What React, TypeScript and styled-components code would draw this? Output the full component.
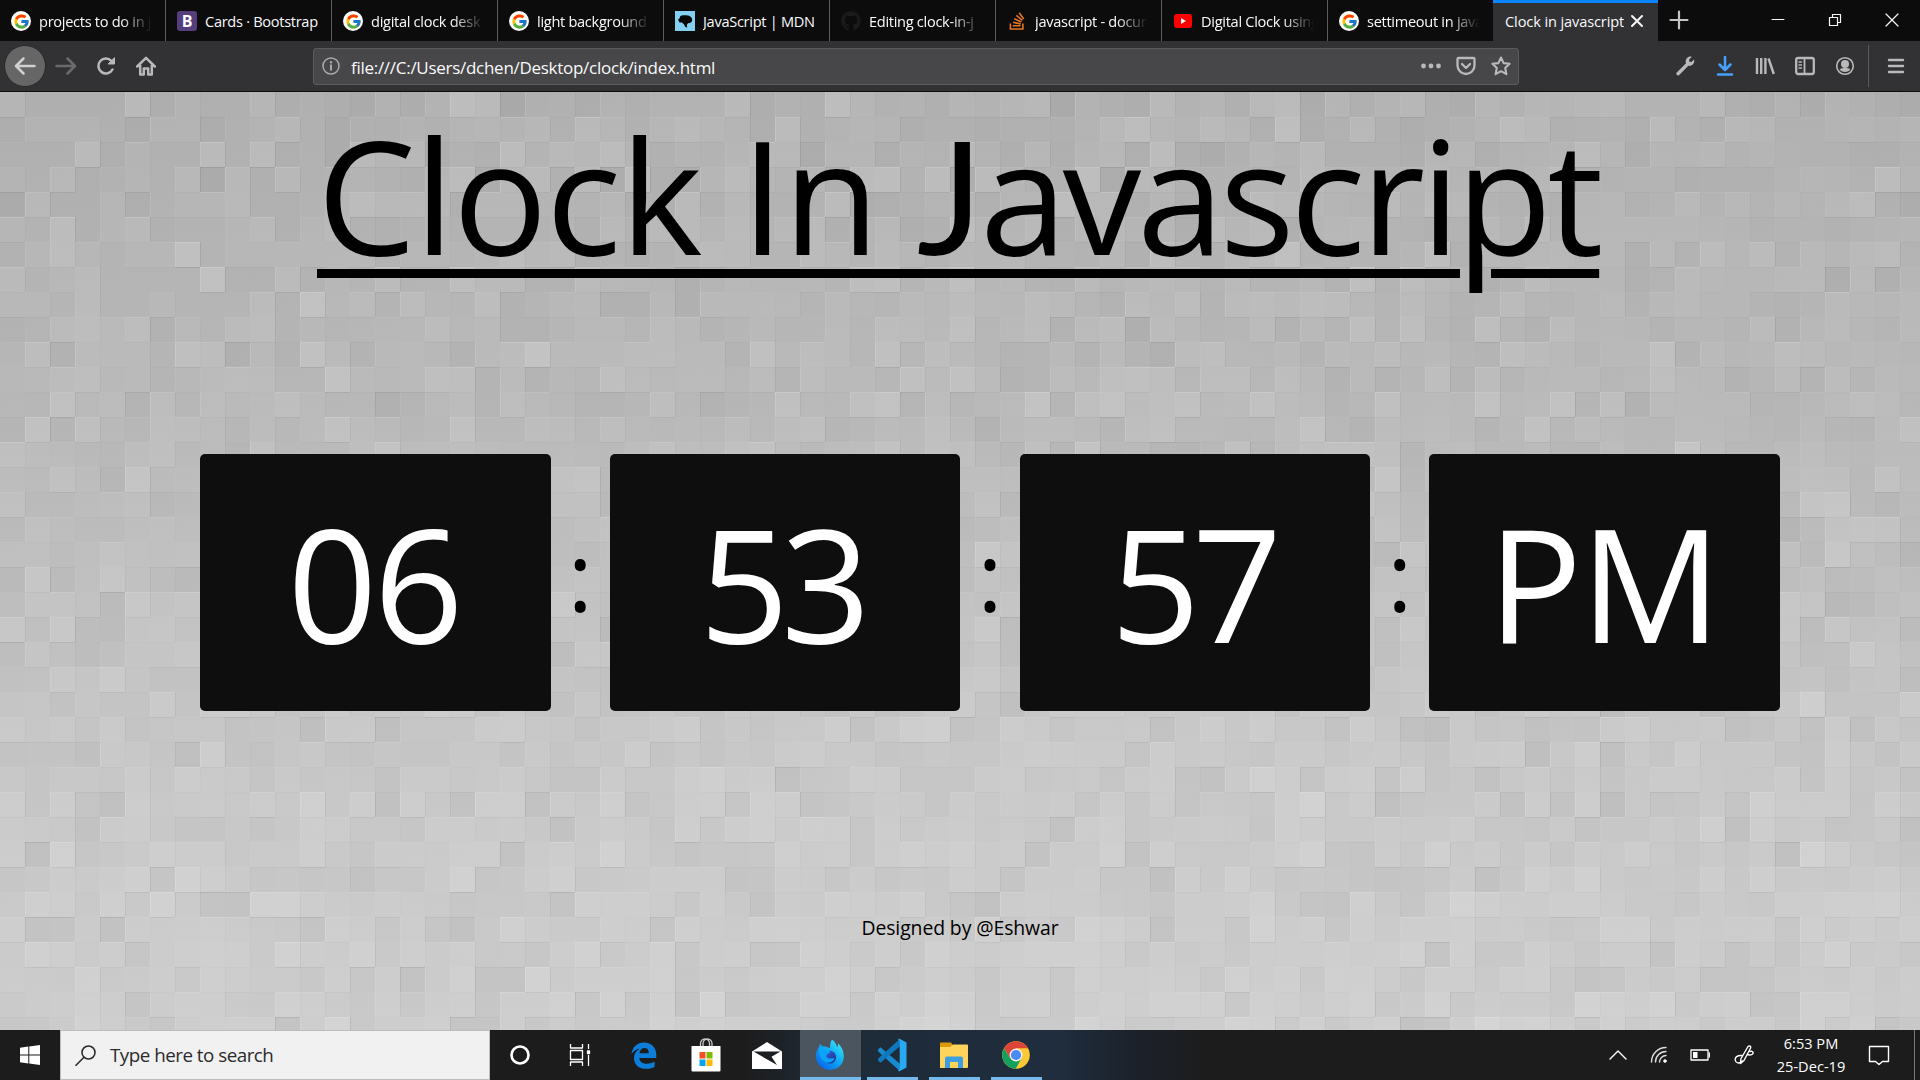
import React from 'react';
import styled, { createGlobalStyle, css } from 'styled-components';
import { FcGoogle } from 'react-icons/fc';
import { FaGithub, FaStackOverflow } from 'react-icons/fa';

const GlobalStyle = createGlobalStyle`
  * { box-sizing: border-box; }
  html, body { margin: 0; padding: 0; }
  body {
    width: 1920px; height: 1080px; overflow: hidden; background: #bdbdbd;
    font-family: "Open Sans", "Noto Sans", sans-serif;
  }
  svg { display: block; flex: none; }
`;

const Screen = styled.div`
  width: 1920px; height: 1080px; display: flex; flex-direction: column; overflow: hidden;
`;

/* ---------- tab strip ---------- */
const TabStrip = styled.header`
  height: 41px; flex: none; display: flex; background: #0c0c0d; color: #f9f9fa;
`;
const Tab = styled.div<{ $active?: boolean; $last?: boolean }>`
  width: 166px; height: 41px; flex: none; display: flex; align-items: center;
  padding: 1px 12px 0 11px; gap: 8px;
  border-right: 1px solid ${p => (p.$active || p.$last ? 'transparent' : '#5d5d5f')};
  ${p => p.$active && css`
    width: 165px; margin-left: -1px; background: #323234; box-shadow: inset 0 3px #0a84ff;
    border-right: 0; gap: 6px; padding-left: 12px;
  `}
`;
const Favicon = styled.span<{ $bg?: string; $round?: boolean }>`
  width: 20px; height: 20px; flex: none; display: flex; align-items: center; justify-content: center;
  background: ${p => p.$bg ?? 'transparent'};
  border-radius: ${p => (p.$round ? '50%' : '0')};
`;
const TabLabel = styled.span<{ $track: number; $fade?: boolean }>`
  flex: ${p => (p.$fade ? 1 : 'none')}; min-width: 0; overflow: hidden; white-space: nowrap;
  font-size: 14.6px; line-height: 22px; letter-spacing: ${p => p.$track}px; margin-bottom: 1px;
  ${p => p.$fade && css`mask-image: linear-gradient(to right, #000 72%, transparent 99%);`}
`;
const BootstrapBadge = styled.span`
  width: 20px; height: 20px; border-radius: 3px; background: #563d7c; color: #fff;
  font-size: 16px; font-weight: 700; line-height: 20px; text-align: center;
`;
const NewTab = styled.div`
  width: 42px; height: 41px; display: flex; align-items: center; justify-content: center; padding-bottom: 1px;
`;
const WindowButtons = styled.div`
  margin-left: auto; display: flex; height: 40px;
`;
const WindowButton = styled.span`
  width: 57px; display: flex; align-items: center; justify-content: center;
`;

/* ---------- navigation bar ---------- */
const NavBar = styled.nav`
  height: 51px; flex: none; display: flex; align-items: center; background: #323234;
  border-bottom: 1px solid #0c0c0d; color: #b9b9ba;
`;
const NavButtons = styled.div`
  width: 313px; display: flex; align-items: center; padding-left: 4px;
`;
const NavButton = styled.span<{ $round?: boolean; $dim?: boolean }>`
  width: ${p => (p.$round ? 42 : 40)}px; height: ${p => (p.$round ? 42 : 40)}px;
  display: flex; align-items: center; justify-content: center;
  opacity: ${p => (p.$dim ? 0.42 : 1)};
  ${p => p.$round && css`border-radius: 50%; background: #666667; border: 1px solid #29292a;`}
`;
const UrlField = styled.div`
  width: 1206px; height: 37px; display: flex; align-items: center; padding: 0 7px 0 8px;
  background: #474749; border: 1px solid #5b5b5d; border-radius: 3px;
`;
const UrlText = styled.span`
  margin-left: 11px; padding-top: 4px; font-size: 17px; line-height: 24px; letter-spacing: -0.28px; color: #f9f9fa;
`;
const UrlActions = styled.div`
  margin-left: auto; display: flex; align-items: center; gap: 15px;
`;
const Tools = styled.div`
  flex: 1; height: 50px; display: flex; align-items: center; justify-content: flex-end; gap: 20px; padding-right: 14px;
`;
const ToolDivider = styled.i`
  width: 1px; height: 42px; background: #5b5b5d; margin: 0 -3px 0 -7px;
`;

/* ---------- page ---------- */
const Page = styled.main`
  position: relative; height: 938px; flex: none; overflow: hidden;
  background:
    radial-gradient(ellipse 1300px 900px at 50% 60%, rgba(255,255,255,.06), transparent),
    linear-gradient(#b1b1b1, #b9b9b9 35%, #c5c5c5 65%, #cdcdcd);
`;
const Mosaic = styled.svg`
  position: absolute; inset: 0;
`;
const Content = styled.div`
  position: relative; height: 100%; display: flex; flex-direction: column; color: #000;
`;
const Title = styled.h1`
  margin: 0; height: 362px; padding-left: 317px; font-weight: 400; font-size: 157px; line-height: 204px;
  letter-spacing: -1.3px; white-space: nowrap; text-decoration: underline;
  text-decoration-thickness: 9px; text-underline-offset: 14px;
`;
const TitleJ = styled.span`
  font-family: Lato, sans-serif; letter-spacing: 0; margin: 0 -3px 0 -1px;
`;
const TitleTail = styled.span`
  letter-spacing: -4.4px;
`;
const ClockRow = styled.section`
  display: flex; height: 257px; padding-left: 200px;
`;
const Card = styled.div<{ $track: number; $shift: number }>`
  width: 350.6px; height: 257px; flex: none; background: #0e0e0e; color: #fff; border-radius: 5px;
  padding-right: ${p => p.$shift}px;
  font-size: 157px; line-height: 257px; letter-spacing: ${p => p.$track}px; text-align: center;
`;
const Colon = styled.div`
  width: 59.2px; height: 257px; flex: none; text-align: center; font-size: 95px; line-height: 243px;
`;
const Credit = styled.p`
  margin: 203px 0 0; text-align: center; font-size: 19.4px; line-height: 28px; letter-spacing: -0.1px;
`;

/* ---------- taskbar ---------- */
const Taskbar = styled.footer`
  height: 50px; flex: none; display: flex; color: #fff;
  background: linear-gradient(to right, #1c1c1c 745px, #1e2b38 830px, #1f2d3e 1060px, #1c222b 1130px, #1c1c1c 1210px);
`;
const StartButton = styled.div`
  width: 60px; display: flex; align-items: center; justify-content: center;
`;
const SearchBox = styled.div`
  width: 430px; height: 50px; display: flex; align-items: center; gap: 14px; padding-left: 14px;
  background: #f1f1f1; border: 1px solid #bcbcbc; color: #2b2b2b; font-size: 18.8px; letter-spacing: -0.5px;
`;
const TaskItem = styled.div<{ $w?: number; $active?: boolean; $open?: boolean }>`
  width: ${p => p.$w ?? 62}px; height: 50px; display: flex; align-items: center; justify-content: center;
  ${p => p.$open && css`background: linear-gradient(#76b9ed, #76b9ed) center bottom / 51px 3px no-repeat;`}
  ${p => p.$active && css`background: #4a555f; box-shadow: inset 0 -3px #76b9ed; padding-right: 2px;`}
`;
const Tray = styled.div`
  margin-left: auto; display: flex; align-items: center;
`;
const TrayItem = styled.span<{ $w: number; $end?: number }>`
  width: ${p => p.$w}px; padding-right: ${p => p.$end ?? 0}px; display: flex; justify-content: center;
`;
const DateTime = styled.div`
  width: 80px; margin-right: 5px; text-align: center; font-size: 14.6px; line-height: 23px; letter-spacing: 0;
`;
const ShowDesktop = styled.i`
  width: 6px; height: 50px; border-left: 1px solid #777;
`;

/* ---------- mosaic texture ---------- */
const TILE = 25;
const COLS = 77;
const ROWS = 38;
const CORNER = [
  '6444473544634', '3555425524564', '4447354474734', '5463454616364', '1633524556334',
  '5473563445635', '3575455845555', '6456444483363', '5546445444638',
];
const noise = (x: number, y: number) => {
  let h = Math.imul(x + 11, 374761393) ^ Math.imul(y + 7, 668265263);
  h = Math.imul(h ^ (h >>> 13), 1274126177);
  return ((h ^ (h >>> 16)) >>> 0) / 4294967296;
};
const level = (x: number, y: number) => {
  if (y < CORNER.length && x < CORNER[0].length) return Number(CORNER[y][x]) - 4.5;
  return (noise(x, y) + noise(x + 101, y + 57) + noise(x + 43, y + 211) - 1.5) * 2.9;
};

const Texture = () => {
  const tiles: React.ReactNode[] = [];
  for (let y = 0; y < ROWS; y++) {
    for (let x = 0; x < COLS; x++) {
      const v = level(x, y);
      const left = v - level(Math.max(0, x - 1), y);
      const top = v - level(x, Math.max(0, y - 1));
      const tone = (n: number) => (n > 0 ? '#fff' : '#000');
      const edge = (n: number) => Math.min(n > 0 ? 0.15 : 0.07, Math.abs(n) * (n > 0 ? 0.04 : 0.018));
      const px = x * TILE;
      const py = y * TILE;
      tiles.push(
        <g key={`${x}-${y}`}>
          <rect x={px} y={py} width={TILE} height={TILE} fill={tone(v)} opacity={Math.abs(v) * (v > 0 ? 0.04 : 0.013)} />
          <rect x={px} y={py} width={1} height={TILE} fill={tone(left)} opacity={edge(left)} />
          <rect x={px} y={py} width={TILE} height={1} fill={tone(top)} opacity={edge(top)} />
        </g>,
      );
    }
  }
  return <Mosaic width={1925} height={950} shapeRendering="crispEdges">{tiles}</Mosaic>;
};

/* ---------- icons ---------- */
const Stroke = ({ w = 20, h = 20, sw = 2, box, children, color = 'currentColor' }: {
  w?: number; h?: number; sw?: number; box?: string; color?: string; children: React.ReactNode;
}) => (
  <svg width={w} height={h} viewBox={box ?? `0 0 ${w} ${h}`} fill="none" stroke={color} strokeWidth={sw}
    strokeLinecap="round" strokeLinejoin="round">{children}</svg>
);

const Google = () => <Favicon $bg="#fff" $round><FcGoogle size={17} /></Favicon>;
const Mdn = () => (
  <Favicon $bg="#83d0f2">
    <svg width="20" height="20" viewBox="0 0 20 20"><path d="M3 8.500 4.500 7.500 5 5.500Q7 3.800 9.500 4.300 14 3.500 16.500 6.500 18 9 16.500 11 15 12.300 13 12.300L11.800 14 12.300 16.500Q9.500 16 9 13.500L7 11.500 4.500 11.500Z" fill="#080808" /></svg>
  </Favicon>
);
const YouTube = () => (
  <Favicon><svg width="18" height="14" viewBox="0 0 18 14"><rect width="18" height="14" rx="3" fill="#f00" /><path d="M7 4v6l5-3z" fill="#fff" /></svg></Favicon>
);

const Edge = () => (
  <svg width="26" height="27" viewBox="0 0 26 27">
    <path fill="#0c7ed9" d="M.5 12C1.5 4.500 6.500.5 13 .5c7.500 0 12.300 5 12.300 12.300V16H8.300c.3 4 3.700 5.800 7.700 5.800 3 0 5.500-.9 7.600-2.200v5.300c-2.500 1.200-5.500 1.900-8.800 1.900C7.500 26.800 3 22.500 3 16.200c0-4.200 2-7.600 5.700-9.400C5.200 7.300 2.600 9 .5 12Zm8-.8h9.300c0-3.300-1.600-5.200-4.300-5.200-2.800 0-4.600 2-5 5.200Z" />
  </svg>
);
const Store = () => (
  <svg width="30" height="34" viewBox="0 0 30 34">
    <path d="M9.500 9V5.500a4.500 4.500 0 0 1 9 0V9M12 9V5.500a4.500 4.500 0 0 1 9 0V9" fill="none" stroke="#c9c9c9" strokeWidth="1.300" />
    <path d="M.5 8h29v24.500a1 1 0 0 1-1 1h-27a1 1 0 0 1-1-1z" fill="#fff" />
    <path d="M8.500 14h6v6.500h-6z" fill="#f25022" /><path d="M15.500 14h6v6.500h-6z" fill="#7fba00" />
    <path d="M8.500 21.500h6V28h-6z" fill="#00a4ef" /><path d="M15.500 21.500h6V28h-6z" fill="#ffb900" />
  </svg>
);
const Mail = () => (
  <svg width="30" height="27" viewBox="0 0 30 24" preserveAspectRatio="none">
    <path d="M0 8.500 15 0l15 8.500V24H0z" fill="#fff" /><path d="M1.500 8.500h27l-9 4.500 5.500 7.500L1.500 8.500Z" fill="#1c1f22" />
  </svg>
);
const Firefox = () => (
  <svg width="30" height="32" viewBox="0 0 30 30" preserveAspectRatio="none">
    <defs>
      <linearGradient id="fxBody" x1="1" y1="0" x2="0.2" y2="1"><stop offset="0" stopColor="#4df3f2" /><stop offset=".45" stopColor="#12b4f6" /><stop offset="1" stopColor="#0763e8" /></linearGradient>
      <linearGradient id="fxCore" x1="0" y1="0" x2="1" y2="1"><stop offset="0" stopColor="#2b6cd8" /><stop offset="1" stopColor="#25268d" /></linearGradient>
    </defs>
    <path d="M17 .5c3 2 4.500 4.500 5 7 1-.5 1.200-2 1-3.500 3.500 3 5.800 7.500 5.800 12.500C28.800 23.800 23 29 15 29S1 23.500 1 16c0-3.500 1.200-6.300 3-8.500L5 4.500l2.500 2.500c1.500-.3 2.800-.1 4 .4L15 8.500c0-3 .3-5.500 2-8Z" fill="url(#fxBody)" />
    <circle cx="15" cy="17" r="6" fill="url(#fxCore)" />
    <path d="M4 8.500c2.500 0 5 .5 6.500 2.200 2 .2 4 .6 5 1.300-.8 1.500-3 1.700-4 3-.9 1.100.4 3 2.500 3.300 2 .3 3.500-.8 5.500 0-1.500 3.500-5.500 4.600-9 3.200C5.500 19.500 4 14 4 8.500Z" fill="#0aa5fb" />
  </svg>
);
const VsCode = () => (
  <svg width="30" height="34" viewBox="0 0 30 31" preserveAspectRatio="none">
    <path d="M1 10.500 3.500 8.500 23 23.500v6.800L1.200 12.200z" fill="#1789cf" />
    <path d="M1 20.500 3.500 22.500 23 7.500V.7L1.200 18.800z" fill="#0f78bc" />
    <path d="M22 .5 29.500 4v23L22 30.500 20.800 29c1 .5 1.900 0 1.900-1V3c0-1-.9-1.500-1.900-1z" fill="#29a9f2" />
  </svg>
);
const Explorer = () => (
  <svg width="30" height="27" viewBox="0 0 30 27">
    <path d="M1 1.500a1 1 0 0 1 1-1h10l2 3v4H1z" fill="#dc9a09" />
    <path d="M1 5h10l3-2.500h14a1 1 0 0 1 1 1V25a1 1 0 0 1-1 1H1z" fill="#ffd45a" />
    <path d="M6 26V16.500a2 2 0 0 1 2-2h14a2 2 0 0 1 2 2V26h-5v-6h-8v6z" fill="#3f9ee0" />
  </svg>
);
const Chrome = () => (
  <svg width="28" height="28" viewBox="0 0 28 28">
    <circle cx="14" cy="14" r="13.800" fill="#fcc934" />
    <path d="M14 14 2 7.200A13.800 13.800 0 0 1 26 7.200H14z" fill="#dc4437" />
    <path d="M2 7.200 8.500 18 14 7.200z" fill="#dc4437" />
    <path d="M2 7.200A13.800 13.800 0 0 0 13.700 27.800l5.700-10.300L8.100 17.300z" fill="#16a05d" />
    <circle cx="14" cy="14" r="6.500" fill="#f1f1f1" /><circle cx="14" cy="14" r="5.100" fill="#4a8af4" />
  </svg>
);

const tabs: { icon: React.ReactNode; label: string; fade?: boolean }[] = [
  { icon: <Google />, label: 'projects to do in j', fade: true },
  { icon: <BootstrapBadge>B</BootstrapBadge>, label: 'Cards · Bootstrap' },
  { icon: <Google />, label: 'digital clock desk', fade: true },
  { icon: <Google />, label: 'light background', fade: true },
  { icon: <Mdn />, label: 'JavaScript | MDN' },
  { icon: <Favicon><FaGithub size={20} color="#1b1a1c" /></Favicon>, label: 'Editing clock-in-j', fade: true },
  { icon: <Favicon><FaStackOverflow size={20} color="#e87722" /></Favicon>, label: 'javascript - docum', fade: true },
  { icon: <YouTube />, label: 'Digital Clock using', fade: true },
  { icon: <Google />, label: 'settimeout in java', fade: true },
];

export default function App() {
  return (
    <Screen>
      <GlobalStyle />
      <TabStrip>
        {tabs.map((t, i) => (
          <Tab key={t.label} $last={i === tabs.length - 1}>
            {t.icon}
            <TabLabel $track={-0.3} $fade={t.fade}>{t.label}</TabLabel>
          </Tab>
        ))}
        <Tab $active>
          <TabLabel $track={-0.12}>Clock in javascript</TabLabel>
          <Stroke w={14} h={14} sw={2}><path d="M2 2l10 10M12 2 2 12" /></Stroke>
        </Tab>
        <NewTab><Stroke sw={2.2} color="#c6c6c7"><path d="M10 1.500v17M1.500 10h17" /></Stroke></NewTab>
        <WindowButtons>
          <WindowButton><Stroke w={14} h={14} sw={1}><path d="M1 6.500h12" /></Stroke></WindowButton>
          <WindowButton><Stroke w={14} h={14} sw={1.2}><path d="M1.500 4.500h8v8h-8zM4.500 4V1.500h8v8H10" /></Stroke></WindowButton>
          <WindowButton><Stroke w={14} h={14} sw={1.2}><path d="M1 1l12 12M13 1 1 13" /></Stroke></WindowButton>
        </WindowButtons>
      </TabStrip>

      <NavBar>
        <NavButtons>
          <NavButton $round><Stroke w={22} h={22} sw={2.5} color="#d0d0d0"><path d="M20.500 11H2M9.500 3.500 2 11l7.500 7.500" /></Stroke></NavButton>
          <NavButton $dim><Stroke w={22} h={22} sw={2.5}><path d="M1.500 11H20M12.500 3.500 20 11l-7.500 7.500" /></Stroke></NavButton>
          <NavButton><Stroke w={20} h={20} sw={2.5}><path d="M16.500 13.500A7.500 7.500 0 1 1 15.500 5" /><path d="M18.500 2v6h-6z" fill="currentColor" strokeWidth="1" /></Stroke></NavButton>
          <NavButton><Stroke w={20} h={20} sw={2.5}><path d="M1.200 10.500 10 1.800l8.800 8.700M4.200 9v9.500h3.600v-6h4.400v6h3.600V9" /></Stroke></NavButton>
        </NavButtons>
        <UrlField>
          <Stroke w={18} h={18} sw={1.5} color="#aaa"><circle cx="9" cy="9" r="8" /><path d="M9 8.300v4.500" strokeWidth="2" /><circle cx="9" cy="5.200" r=".5" /></Stroke>
          <UrlText>file:///C:/Users/dchen/Desktop/clock/index.html</UrlText>
          <UrlActions>
            <svg width="20" height="6" fill="currentColor"><circle cx="2.500" cy="3" r="2.400" /><circle cx="10" cy="3" r="2.400" /><circle cx="17.500" cy="3" r="2.400" /></svg>
            <Stroke w={20} h={20} sw={2.3}><path d="M2.500 2h15q1 0 1 1v6.500a8.500 8.500 0 0 1-17 0V3q0-1 1-1ZM6 8l4 4 4-4" /></Stroke>
            <Stroke w={20} h={20} sw={2.1}><path d="m10 1.500 2.600 5.600 6 .7-4.400 4.200 1.200 6.200-5.400-3-5.400 3L5.800 12 1.400 7.800l6-.7z" /></Stroke>
          </UrlActions>
        </UrlField>
        <Tools>
          <svg width="20" height="20" viewBox="0 0 20 20" fill="currentColor"><path d="M13.500 1c1-.5 2.200-.5 3.200-.1L14 3.700l.4 2 2 .4 2.700-2.700c.8 4-2 7-5.800 6.400L4 19.200c-1 1-3.500-1-2.500-2.500L11 7.300C10 4.500 11.200 2.200 13.500 1Z" /></svg>
          <Stroke w={20} h={20} sw={2.5} color="#45a1ff"><path d="M10 1v12.500M4.500 8.500 10 14l5.500-5.500M3 18.500h14" /></Stroke>
          <Stroke w={20} h={20} sw={2.4}><path d="M2 2v16M6.200 2v16M10.400 2v16M13.500 2.500l5.300 15.500" strokeLinecap="butt" /></Stroke>
          <Stroke w={20} h={20} sw={2.3}><rect x="1.200" y="2" width="17.600" height="16" rx="2" /><path d="M9.500 2v16" strokeWidth="1.800" /><path d="M4 6h2.500M4 9h2.500M4 12h2.500" strokeWidth="1.300" /></Stroke>
          <Stroke w={20} h={20} sw={1.6}><circle cx="10" cy="10" r="8.300" /><circle cx="10" cy="8" r="4" fill="currentColor" stroke="none" /><path d="M4.500 13c3-1.500 8-1.500 11 0a6.500 6.500 0 0 1-11 0Z" fill="currentColor" stroke="none" /></Stroke>
          <ToolDivider />
          <Stroke w={20} h={20} sw={2.4}><path d="M3 4h14M3 10h14M3 16h14" /></Stroke>
        </Tools>
      </NavBar>

      <Page>
        <Texture />
        <Content>
          <Title>Clock In <TitleJ>J</TitleJ><TitleTail>avascript</TitleTail></Title>
          <ClockRow>
            <Card $track={-3.4} $shift={3}>06</Card><Colon>:</Colon>
            <Card $track={-8} $shift={8}>53</Card><Colon>:</Colon>
            <Card $track={-8} $shift={5}>57</Card><Colon>:</Colon>
            <Card $track={-2} $shift={2}>PM</Card>
          </ClockRow>
          <Credit>Designed by @Eshwar</Credit>
        </Content>
      </Page>

      <Taskbar>
        <StartButton><svg width="20" height="20" viewBox="0 0 20 20" fill="#fff"><path d="M0 2.800 8.300 1.600v7.900H0zM9.300 1.400 20 0v9.500H9.300zM0 10.500h8.300v7.900L0 17.200zM9.300 10.500H20V20L9.300 18.600z" /></svg></StartButton>
        <SearchBox>
          <Stroke w={21} h={21} sw={1.6}><circle cx="13.500" cy="7.500" r="6.500" /><path d="M9 12.300 1 20.300" /></Stroke>
          Type here to search
        </SearchBox>
        <TaskItem $w={60}><Stroke w={20} h={20} sw={2.6}><circle cx="10" cy="10" r="8.500" /></Stroke></TaskItem>
        <TaskItem $w={60}><Stroke w={22} h={22} sw={1.3}><path d="M1.500 0v4h12V0M1.500 6.500h12v9h-12zM1.500 22v-4h12v4M19.500 0v5M19.500 11V22" strokeLinecap="butt" /><path d="M18.500 7h2v2.500h-2z" fill="#fff" /></Stroke></TaskItem>
        <TaskItem $w={68}><Edge /></TaskItem>
        <TaskItem $w={56}><Store /></TaskItem>
        <TaskItem $w={66}><Mail /></TaskItem>
        <TaskItem $w={61} $active><Firefox /></TaskItem>
        <TaskItem $open><VsCode /></TaskItem>
        <TaskItem $open><Explorer /></TaskItem>
        <TaskItem $open><Chrome /></TaskItem>
        <Tray>
          <TrayItem $w={34}><Stroke w={18} h={10} sw={1.4}><path d="m1 9 8-8 8 8" /></Stroke></TrayItem>
          <TrayItem $w={48}><Stroke w={18} h={18} sw={1.4}><path d="M1.500 16A14.500 14.500 0 0 1 16 1.500M5.500 16A10.500 10.500 0 0 1 16 5.500M9.500 16A6.500 6.500 0 0 1 16 9.500" opacity=".85" /><circle cx="15" cy="15" r="1.500" fill="#fff" strokeWidth=".5" /></Stroke></TrayItem>
          <TrayItem $w={34}><Stroke w={20} h={12} sw={1.3}><path d="M1 1h17v10H1z" /><path d="M19.300 4v4" /><path d="M3 3h4.500v6H3z" fill="#fff" stroke="none" /></Stroke></TrayItem>
          <TrayItem $w={54}><Stroke w={20} h={20} sw={1.4}><path d="M14 1.500c1.500-1.300 3.200 0 2.600 1.500L10 15.500 6.500 18.500l.3-4.500zM8 10.500c-5-.5-7 2-6.800 4.500.3 3 4 4.500 7 1M13 9.500c4 1.200 6.500-.2 6-2.200-.3-1-1.500-1.300-3-.8" /></Stroke></TrayItem>
          <DateTime>6:53 PM<br />25-Dec-19</DateTime>
          <TrayItem $w={58} $end={12}><Stroke w={22} h={21} sw={1.4}><path d="M1.500 1.500h19v15h-6l-3.500 3-3.500-3h-6z" /></Stroke></TrayItem>
          <ShowDesktop />
        </Tray>
      </Taskbar>
    </Screen>
  );
}
